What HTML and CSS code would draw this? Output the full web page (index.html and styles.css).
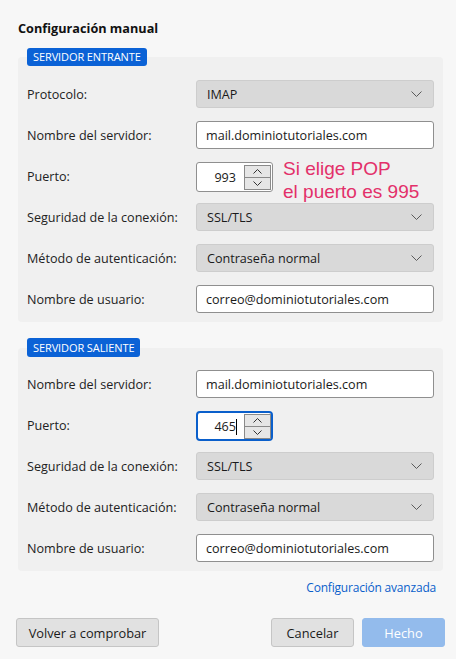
FILE: index.html
```html
<!DOCTYPE html>
<html lang="es">
<head>
<meta charset="utf-8">
<title>Configuración manual</title>
<link rel="stylesheet" href="styles.css">
</head>
<body>
<div class="page">
  <h1 class="title">Configuración manual</h1>

  <section class="section">
    <div class="badge">SERVIDOR ENTRANTE</div>
    <div class="panel">
      <div class="row">
        <span class="label">Protocolo:</span>
        <div class="select"><span>IMAP</span><svg class="chev" width="11" height="6" viewBox="0 0 11 6"><polyline points="0.5,0.5 5.5,5.5 10.5,0.5" fill="none" stroke="#5a5a5a" stroke-width="1"/></svg></div>
      </div>
      <div class="row">
        <span class="label">Nombre del servidor:</span>
        <div class="input">mail.dominiotutoriales.com</div>
      </div>
      <div class="row">
        <span class="label">Puerto:</span>
        <div class="port">
          <span class="num">993</span>
          <div class="spin">
            <div class="sbtn"><svg width="9" height="5" viewBox="0 0 9 5"><polyline points="0.5,4.5 4.5,0.5 8.5,4.5" fill="none" stroke="#333" stroke-width="1"/></svg></div>
            <div class="sbtn"><svg width="9" height="5" viewBox="0 0 9 5"><polyline points="0.5,0.5 4.5,4.5 8.5,0.5" fill="none" stroke="#333" stroke-width="1"/></svg></div>
          </div>
        </div>
        <div class="note">Si elige POP<br>el puerto es 995</div>
      </div>
      <div class="row">
        <span class="label">Seguridad de la conexión:</span>
        <div class="select"><span>SSL/TLS</span><svg class="chev" width="11" height="6" viewBox="0 0 11 6"><polyline points="0.5,0.5 5.5,5.5 10.5,0.5" fill="none" stroke="#5a5a5a" stroke-width="1"/></svg></div>
      </div>
      <div class="row">
        <span class="label">Método de autenticación:</span>
        <div class="select"><span>Contraseña normal</span><svg class="chev" width="11" height="6" viewBox="0 0 11 6"><polyline points="0.5,0.5 5.5,5.5 10.5,0.5" fill="none" stroke="#5a5a5a" stroke-width="1"/></svg></div>
      </div>
      <div class="row">
        <span class="label">Nombre de usuario:</span>
        <div class="input">correo@dominiotutoriales.com</div>
      </div>
    </div>
  </section>

  <section class="section second">
    <div class="badge">SERVIDOR SALIENTE</div>
    <div class="panel">
      <div class="row">
        <span class="label">Nombre del servidor:</span>
        <div class="input">mail.dominiotutoriales.com</div>
      </div>
      <div class="row">
        <span class="label">Puerto:</span>
        <div class="port focused">
          <span class="num">465<span class="caret"></span></span>
          <div class="spin">
            <div class="sbtn"><svg width="9" height="5" viewBox="0 0 9 5"><polyline points="0.5,4.5 4.5,0.5 8.5,4.5" fill="none" stroke="#333" stroke-width="1"/></svg></div>
            <div class="sbtn"><svg width="9" height="5" viewBox="0 0 9 5"><polyline points="0.5,0.5 4.5,4.5 8.5,0.5" fill="none" stroke="#333" stroke-width="1"/></svg></div>
          </div>
        </div>
      </div>
      <div class="row">
        <span class="label">Seguridad de la conexión:</span>
        <div class="select"><span>SSL/TLS</span><svg class="chev" width="11" height="6" viewBox="0 0 11 6"><polyline points="0.5,0.5 5.5,5.5 10.5,0.5" fill="none" stroke="#5a5a5a" stroke-width="1"/></svg></div>
      </div>
      <div class="row">
        <span class="label">Método de autenticación:</span>
        <div class="select"><span>Contraseña normal</span><svg class="chev" width="11" height="6" viewBox="0 0 11 6"><polyline points="0.5,0.5 5.5,5.5 10.5,0.5" fill="none" stroke="#5a5a5a" stroke-width="1"/></svg></div>
      </div>
      <div class="row">
        <span class="label">Nombre de usuario:</span>
        <div class="input">correo@dominiotutoriales.com</div>
      </div>
    </div>
  </section>

  <div class="linkrow"><a class="link">Configuración avanzada</a></div>

  <div class="buttons">
    <button class="btn">Volver a comprobar</button>
    <div class="right">
      <button class="btn">Cancelar</button>
      <button class="btn primary">Hecho</button>
    </div>
  </div>
</div>
</body>
</html>
```

FILE: styles.css
```css
* { box-sizing: border-box; }
html, body { margin: 0; padding: 0; }
body {
  background: #f7f7f7;
  font-family: "Open Sans", "Noto Sans", sans-serif;
  font-size: 12.6px;
  color: #1a1a1a;
  width: 456px;
  height: 659px;
  overflow: hidden;
}
.page { padding: 19px 13px 0 18px; }
.title {
  margin: 0;
  font-size: 12.7px;
  font-weight: 700;
  line-height: 18px;
  color: #111;
}
.section { margin-top: 11px; }
.section.second { margin-top: 16px; }
.badge {
  position: relative;
  z-index: 1;
  display: inline-block;
  margin-left: 9px;
  height: 18px;
  line-height: 18px;
  padding: 0 6px;
  background: #0b62d6;
  color: #fff;
  font-size: 11px;
  border-radius: 3px;
  letter-spacing: -0.1px;
}
.second .badge { height: 19px; line-height: 19px; }
.panel {
  margin-top: -9px;
  width: 425px;
  background: #f0f0f0;
  border-radius: 4px;
  padding: 23px 9px 9px 9px;
  display: flex;
  flex-direction: column;
  gap: 13px;
}
.second .panel { margin-top: -9px; padding-top: 22px; }
.row {
  position: relative;
  display: flex;
  align-items: center;
  height: 28px;
}
.label { width: 169px; flex: none; color: #222; }
.select {
  width: 238px;
  height: 28px;
  background: #d9d9d9;
  border: 1px solid #cdcdcd;
  border-radius: 3px;
  display: flex;
  align-items: center;
  justify-content: space-between;
  padding: 0 10px 0 10px;
  color: #1a1a1a;
}
.chev { margin-right: 1px; }
.input {
  width: 238px;
  height: 28px;
  background: #fff;
  border: 1px solid #8f8f8f;
  border-radius: 3px;
  display: flex;
  align-items: center;
  padding: 0 9px;
}
.port {
  width: 77px;
  height: 30px;
  background: #fff;
  border: 1px solid #8f8f8f;
  border-radius: 3px;
  display: flex;
  align-items: center;
  justify-content: flex-end;
  padding: 0 1px 0 0;
  margin-top: 2px;
}
.port.focused {
  border: 2px solid #0a5fcb;
  border-radius: 4px;
  padding-right: 0;
}
.num { margin-right: 8px; position: relative; }
.caret {
  position: absolute;
  right: -1px;
  top: 1px;
  width: 1px;
  height: 16px;
  background: #000;
}
.spin {
  width: 27px;
  height: 25px;
  display: flex;
  flex-direction: column;
  border: 1px solid #8a8a8a;
  background: #e6e6e6;
}
.sbtn {
  flex: 1;
  display: flex;
  align-items: center;
  justify-content: center;
}
.sbtn + .sbtn { border-top: 1px solid #8a8a8a; }
.note {
  position: absolute;
  left: 256px;
  top: -5px;
  font-family: "Liberation Sans", Arial, sans-serif;
  font-size: 19px;
  line-height: 23px;
  color: #e3306a;
  white-space: nowrap;
}
.linkrow {
  display: flex;
  justify-content: flex-end;
  padding-right: 7px;
  margin-top: 8px;
  line-height: 18px;
}
.link { color: #0a5fcb; font-size: 12px; letter-spacing: -0.2px; }
.buttons {
  display: flex;
  justify-content: space-between;
  margin-top: 21px;
  margin-left: -2px;
  margin-right: -2px;
}
.right { display: flex; gap: 8px; }
.btn {
  font-family: "Open Sans", "Noto Sans", sans-serif;
  font-size: 12.8px;
  height: 29px;
  padding: 0 6px;
  white-space: nowrap;
  background: #e1e1e1;
  border: 1px solid #c5c5c5;
  border-radius: 3px;
  color: #1a1a1a;
}
.btn:first-child { width: 143px; }
.right .btn { width: 83px; }
.btn.primary {
  background: #93bbec;
  border-color: #93bbec;
  color: #fff;
}
```
